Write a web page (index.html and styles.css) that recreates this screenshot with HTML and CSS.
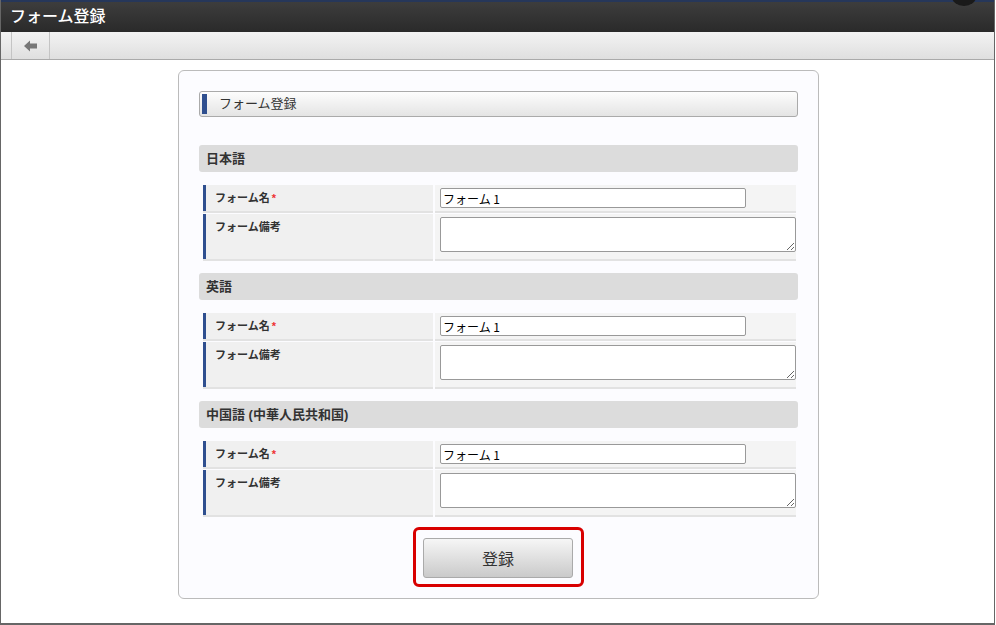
FILE: index.html
```html
<!DOCTYPE html>
<html lang="ja">
<head>
    <meta charset="UTF-8">
    <meta name="viewport" content="width=device-width, initial-scale=1.0">
    <title>フォーム登録</title>
    <link rel="stylesheet" href="styles.css">
</head>
<body>
    <div class="frame">
        <header class="header">
            <h1 class="header-title">フォーム登録</h1>
            <span class="avatar"></span>
        </header>
        <div class="toolbar">
            <a href="#" class="back-btn">
                <svg width="14" height="12" viewBox="0 0 14 12">
                    <path d="M0 6 L6 0.5 L6 3.5 L13 3.5 L13 8.5 L6 8.5 L6 11.5 Z" fill="#777"/>
                </svg>
            </a>
        </div>

        <div class="page">
            <div class="form-container">
                <div class="form-title">フォーム登録</div>

                <div class="section-title">日本語</div>
                <div class="form-table">
                    <div class="label-cell">フォーム名<span class="req">*</span></div>
                    <div class="input-cell"><input type="text" value="フォーム 1"></div>
                    <div class="label-cell tall">フォーム備考</div>
                    <div class="input-cell"><textarea></textarea></div>
                </div>

                <div class="section-title">英語</div>
                <div class="form-table">
                    <div class="label-cell">フォーム名<span class="req">*</span></div>
                    <div class="input-cell"><input type="text" value="フォーム 1"></div>
                    <div class="label-cell tall">フォーム備考</div>
                    <div class="input-cell"><textarea></textarea></div>
                </div>

                <div class="section-title">中国語 (中華人民共和国)</div>
                <div class="form-table">
                    <div class="label-cell">フォーム名<span class="req">*</span></div>
                    <div class="input-cell"><input type="text" value="フォーム 1"></div>
                    <div class="label-cell tall">フォーム備考</div>
                    <div class="input-cell"><textarea></textarea></div>
                </div>

                <div class="actions">
                    <div class="highlight">
                        <button type="submit">登録</button>
                    </div>
                </div>
            </div>
        </div>
    </div>
</body>
</html>
```

FILE: styles.css
```css
body {
    margin: 0;
    padding: 0;
    font-family: "Liberation Sans", "Noto Sans CJK JP", sans-serif;
    background-color: #fff;
    color: #333;
}
.frame {
    width: 995px;
    height: 625px;
    box-sizing: border-box;
    border-left: 1px solid #666;
    border-right: 1px solid #666;
    border-bottom: 2px solid #666;
    overflow: hidden;
}
.header {
    position: relative;
    height: 30px;
    border-top: 2px solid #26375a;
    background: linear-gradient(#3d3d3d, #2a2a2a);
}
.header-title {
    margin: 0;
    padding-left: 9px;
    font-size: 16px;
    font-weight: 500;
    line-height: 30px;
    color: #fff;
}
.avatar {
    position: absolute;
    top: -14px;
    right: 18px;
    width: 24px;
    height: 18px;
    border-radius: 50%;
    background-color: #1a1a1a;
}
.toolbar {
    height: 27px;
    padding-left: 10px;
    background: linear-gradient(#f3f3f3, #dfdfdf);
    border-bottom: 1px solid #aaa;
    display: flex;
}
.back-btn {
    width: 37px;
    display: flex;
    justify-content: center;
    align-items: center;
    border-left: 1px solid #c4c4c4;
    border-right: 1px solid #c4c4c4;
}
.page {
    padding-left: 2px;
}
.form-container {
    width: 599px;
    margin: 10px auto 0;
    padding: 20px 20px 11px;
    background-color: #fcfcff;
    border: 1px solid #bbb;
    border-radius: 6px;
}
.form-title {
    position: relative;
    height: 24px;
    line-height: 24px;
    padding-left: 19px;
    font-size: 13px;
    color: #333;
    border: 1px solid #aaa;
    border-radius: 3px;
    background: linear-gradient(#fdfdfd, #e4e4e4);
}
.form-title::before {
    content: "";
    position: absolute;
    left: 2px;
    top: 2px;
    width: 5px;
    height: 20px;
    background-color: #2f4f8f;
}
.section-title {
    margin-top: 28px;
    height: 27px;
    line-height: 27px;
    padding-left: 7px;
    font-size: 13px;
    font-weight: bold;
    color: #333;
    background-color: #dcdcdc;
    border-radius: 3px;
}
.form-table {
    display: grid;
    grid-template-columns: 232px 1fr;
    gap: 3px 2px;
    padding: 0 2px;
    margin: 13px 0 -14px;
}
.label-cell {
    height: 26px;
    box-sizing: border-box;
    padding: 4px 0 0 9px;
    font-size: 11px;
    font-weight: bold;
    color: #333;
    background-color: #f0f0f0;
    border-left: 3px solid #2f4f8f;
    margin-left: 2px;
    box-shadow: 0 2px 0 #e2e2e2;
}
.label-cell.tall {
    height: 45px;
}
.req {
    color: #e33;
    margin-left: 2px;
}
.input-cell {
    background-color: #f4f4f4;
    padding: 3px 0 0 5px;
    box-shadow: 0 2px 0 #e2e2e2;
}
input {
    width: 306px;
    height: 20px;
    box-sizing: border-box;
    padding: 0 2px;
    border: 1px solid #999;
    border-radius: 2px;
    font-family: "Noto Sans CJK JP", sans-serif;
    font-size: 12px;
    color: #000;
    background-color: #fff;
}
textarea {
    display: block;
    width: 356px;
    height: 35px;
    box-sizing: border-box;
    margin: 0;
    border: 1px solid #999;
    border-radius: 2px;
    background-color: #fff;
}
.actions {
    margin-top: 26px;
    display: flex;
    justify-content: center;
}
.highlight {
    padding: 8px 8px 6px 7px;
    border: 3px solid #d80000;
    border-radius: 6px;
}
button {
    width: 150px;
    height: 40px;
    border: 1px solid #aaa;
    border-radius: 3px;
    background: linear-gradient(#f6f6f6, #cacaca);
    font-family: "Noto Sans CJK JP", sans-serif;
    font-size: 16px;
    color: #333;
    cursor: pointer;
}
```
